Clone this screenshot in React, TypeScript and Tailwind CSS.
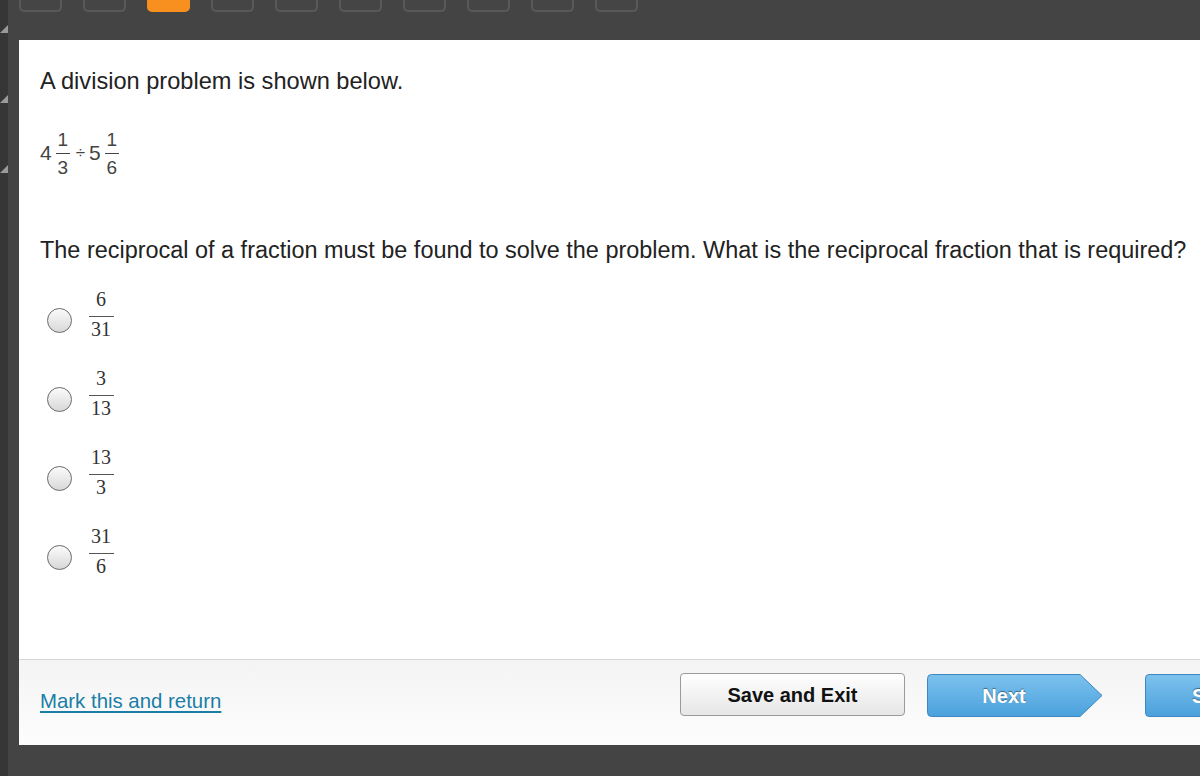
import React from "react";

const Box = ({ active }: { active?: boolean }) =>
  active ? (
    <div className="w-[43px] h-[12px] rounded-b-[5px] bg-[#f7901e]" />
  ) : (
    <div className="w-[43px] h-[12px] rounded-b-[5px] border-x-2 border-b-2 border-[#595959] bg-[#454545]" />
  );

const SansFrac = ({ n, d }: { n: string; d: string }) => (
  <div className="flex flex-col items-center mx-[4px]">
    <span className="text-[19px] leading-[19px]">{n}</span>
    <div className="w-[14px] h-px bg-[#444] my-[4px]" />
    <span className="text-[19px] leading-[19px]">{d}</span>
  </div>
);

const SerifFrac = ({ n, d }: { n: string; d: string }) => (
  <div className="flex flex-col items-center font-['Liberation_Serif',serif] text-[#333] w-[26px] mb-[13px]">
    <span className="text-[20px] leading-[20px]">{n}</span>
    <div className="w-[25px] h-[1.5px] bg-[#555] mt-[7px] mb-[2px]" />
    <span className="text-[20px] leading-[20px]">{d}</span>
  </div>
);

const Option = ({ n, d }: { n: string; d: string }) => (
  <div className="flex items-center h-[79px]">
    <div className="w-[25px] h-[25px] rounded-full border-[1.5px] border-[#6a6a6a] bg-gradient-to-b from-[#fbfbfb] to-[#d8d8d8] ml-[7px] mr-[16px]" />
    <SerifFrac n={n} d={d} />
  </div>
);

const Marker = () => (
  <div className="w-0 h-0 border-l-[8px] border-l-transparent border-b-[8px] border-b-[#9a9a9a]" />
);

export default function App() {
  return (
    <div className="w-[1200px] h-[776px] bg-[#444444] flex overflow-hidden font-['Liberation_Sans',Arial,sans-serif]">
      {/* left strip */}
      <div className="w-[8px] h-full bg-[#363636] flex flex-col pt-[25px] gap-[62px]">
        <Marker />
        <Marker />
        <Marker />
      </div>
      <div className="flex-1 flex flex-col min-w-0">
        {/* top bar */}
        <div className="h-[40px] flex items-start gap-[21px] pl-[11px]">
          <Box />
          <Box />
          <Box active />
          <Box />
          <Box />
          <Box />
          <Box />
          <Box />
          <Box />
          <Box />
        </div>
        {/* panel */}
        <div className="ml-[11px] h-[705px] bg-white flex flex-col">
          <div className="flex-1 pl-[21px] text-[#222]">
            <p className="text-[23.6px] leading-[28px] mt-[27px] whitespace-nowrap">A division problem is shown below.</p>
            <div className="flex items-center text-[#444] mt-[31px] h-[54px]">
              <span className="text-[21px]">4</span>
              <SansFrac n="1" d="3" />
              <span className="text-[17px] mx-[2px]">÷</span>
              <span className="text-[21px] ml-[2px]">5</span>
              <SansFrac n="1" d="6" />
            </div>
            <p className="text-[23.45px] leading-[28px] mt-[56px] whitespace-nowrap">
              The reciprocal of a fraction must be found to solve the problem. What is the reciprocal fraction that is required?
            </p>
            <div className="flex flex-col mt-[17px]">
              <Option n="6" d="31" />
              <Option n="3" d="13" />
              <Option n="13" d="3" />
              <Option n="31" d="6" />
            </div>
          </div>
          {/* footer */}
          <div className="h-[86px] border-t border-[#d6d6d6] bg-gradient-to-b from-[#f4f4f4] to-[#fdfdfd] flex items-start pl-[21px] overflow-hidden">
            <a href="#" className="w-[181px] shrink-0 mt-[29px] text-[20.4px] leading-[24px] text-[#1a7ea6] underline underline-offset-[3px] whitespace-nowrap">
              Mark this and return
            </a>
            <button className="ml-[459px] mt-[13px] shrink-0 w-[225px] h-[43px] rounded-[4px] border border-[#9a9a9a] bg-gradient-to-b from-[#ffffff] to-[#e6e6e6] text-[20px] font-bold text-[#111]">
              Save and Exit
            </button>
            <div className="relative ml-[22px] mt-[14px] shrink-0 w-[176px] h-[43px]">
              <svg className="absolute inset-0" width="176" height="43" viewBox="0 0 176 43">
                <defs>
                  <linearGradient id="nb" x1="0" y1="0" x2="0" y2="1">
                    <stop offset="0" stopColor="#7cc2ee" />
                    <stop offset="1" stopColor="#4ba1dc" />
                  </linearGradient>
                </defs>
                <path d="M4.5 0.5 H153 L175 21.5 L153 42.5 H4.5 Q0.5 42.5 0.5 38.5 V4.5 Q0.5 0.5 4.5 0.5 Z" fill="url(#nb)" stroke="#3f87c0" strokeWidth="1" />
              </svg>
              <span className="absolute inset-y-0 left-0 w-[154px] flex items-center justify-center text-[20px] font-bold text-white [text-shadow:0_-1px_1px_rgba(0,0,0,0.45)]">
                Next
              </span>
            </div>
            <button className="ml-[42px] mt-[14px] shrink-0 w-[176px] h-[43px] rounded-[4px] border border-[#3f87c0] bg-gradient-to-b from-[#7cc2ee] to-[#4ba1dc] text-[20px] font-bold text-white text-left pl-[46px] whitespace-nowrap overflow-hidden [text-shadow:0_-1px_1px_rgba(0,0,0,0.45)]">
              Submit
            </button>
          </div>
        </div>
      </div>
    </div>
  );
}
